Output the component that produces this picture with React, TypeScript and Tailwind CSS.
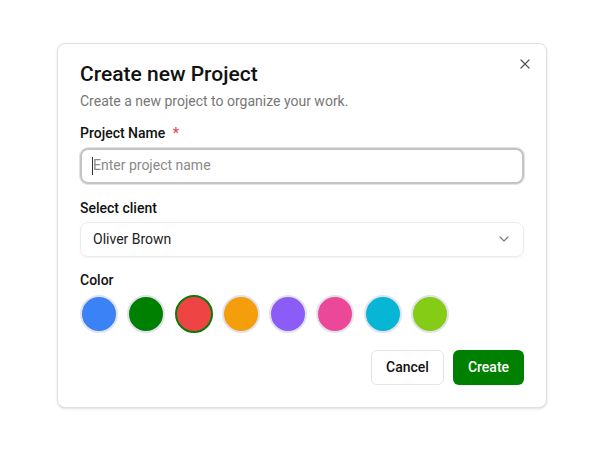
import { X, ChevronDown } from 'lucide-react';

const colors = ['#3b82f6', '#008000', '#ef4444', '#f59e0b', '#8b5cf6', '#ec4899', '#06b6d4', '#84cc16'];

export default function App() {
  const selected = '#ef4444';

  return (
    <div
      className="flex h-[450px] w-[604px] items-center justify-center bg-white"
      style={{ fontFamily: 'Roboto, "Noto Sans", sans-serif' }}
    >
      <div className="relative flex h-[365px] w-[490px] flex-col rounded-lg border border-[#e0e0e0] bg-white px-[22px] pt-[18px] shadow-sm">
        <button className="absolute right-[13px] top-[12px] text-[#555]">
          <X className="h-4 w-4" strokeWidth={1.8} />
        </button>

        {/* Header */}
        <h2 className="text-[21px] font-medium leading-[24px] text-[#111]">Create new Project</h2>
        <p className="mt-[5px] text-[14px] leading-[20px] text-[#777]">Create a new project to organize your work.</p>

        {/* Name */}
        <label className="mt-3 text-[14px] font-medium leading-[20px] text-[#111]">
          Project Name <span className="ml-1 text-[#ef4444]">*</span>
        </label>
        <div className="mt-[5px] flex h-9 items-center rounded-lg border-2 border-[#c4c4c4] px-[10px] shadow-[0_0_0_1px_#e2e2e2]">
          <span className="h-[18px] w-px bg-[#333]" />
          <span className="text-[14px] text-[#8a8a8a]">Enter project name</span>
        </div>

        {/* Client */}
        <label className="mt-[14px] text-[14px] font-medium leading-[20px] text-[#111]">Select client</label>
        <div className="mt-1 flex h-[35px] items-center justify-between rounded-lg border border-[#ebebeb] pl-3 pr-[11px] shadow-[0_1px_2px_rgba(0,0,0,0.06)]">
          <span className="text-[14px] text-[#222]">Oliver Brown</span>
          <ChevronDown className="h-4 w-4 text-[#777]" strokeWidth={1.6} />
        </div>

        {/* Color */}
        <label className="mt-[13px] text-[14px] font-medium leading-[20px] text-[#111]">Color</label>
        <div className="mt-[5px] flex gap-[9.3px]">
          {colors.map((c) => (
            <span
              key={c}
              className={
                c === selected
                  ? 'h-[38px] w-[38px] rounded-full border-2 border-[#0a7a0a]'
                  : 'h-[38px] w-[38px] rounded-full border-2 border-[#e1e2ea]'
              }
              style={{ backgroundColor: c }}
            />
          ))}
        </div>

        {/* Actions */}
        <div className="mt-[17px] flex justify-end gap-[9px]">
          <button className="h-[35px] w-[73px] rounded-md border border-[#e5e5e5] bg-white text-[14px] font-medium text-[#111]">
            Cancel
          </button>
          <button className="h-[35px] w-[71px] rounded-md bg-[#008000] text-[14px] font-medium text-white">
            Create
          </button>
        </div>
      </div>
    </div>
  );
}
